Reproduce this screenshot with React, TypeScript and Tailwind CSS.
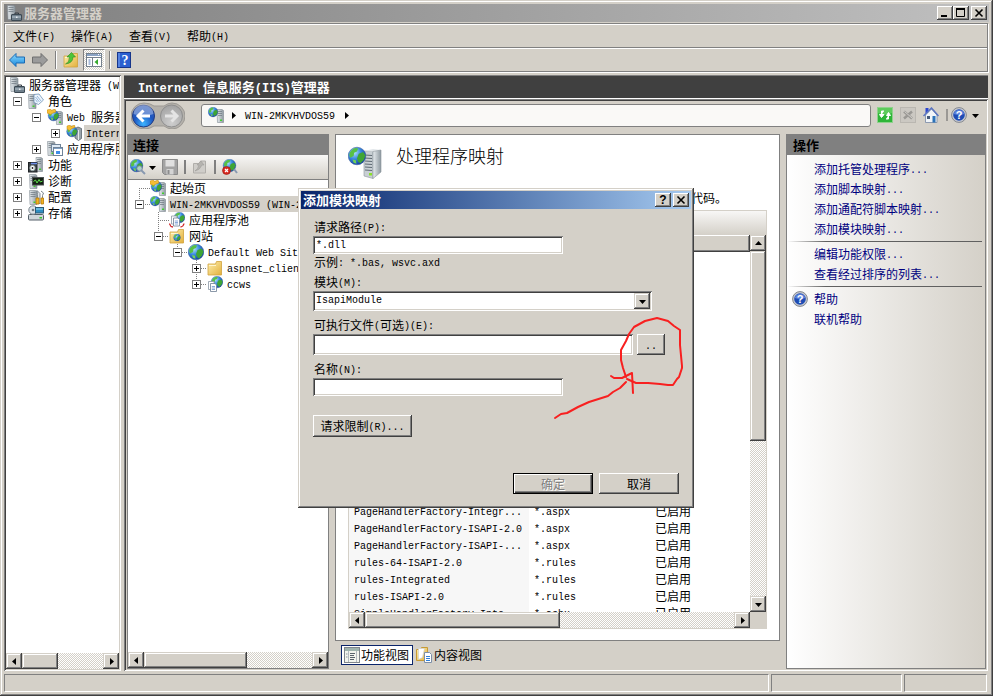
import type { ReactNode } from "react";
import clsx from "clsx";

const RAISED = "bg-[#d4d0c8] shadow-[inset_-1px_-1px_#404040,inset_1px_1px_#fff,inset_-2px_-2px_#808080]";
const RAISED_SOFT = "bg-[#d4d0c8] shadow-[inset_-1px_-1px_#404040,inset_1px_1px_#d4d0c8,inset_-2px_-2px_#808080,inset_2px_2px_#fff]";
const SUNKEN = "shadow-[inset_1px_1px_#808080,inset_-1px_-1px_#fff,inset_2px_2px_#404040,inset_-2px_-2px_#d4d0c8]";
const TRACK = "bg-[repeating-conic-gradient(#fff_0_25%,#d4d0c8_0_50%)] bg-[length:2px_2px]";
const MONO = "font-['Liberation_Mono','Noto_Sans_CJK_SC',monospace]";

// Latin runs are set in a half-width face beside the full-width CJK glyphs
function Txt({ children, bold }: { children: string; bold?: boolean }) {
  return (
    <>
      {children.split(/([\x20-\x7e]+)/).filter(Boolean).map((part, i) =>
        /^[\x20-\x7e]/.test(part) ? (
          <span key={i} className={clsx(MONO, "leading-none whitespace-pre", bold ? "text-[12px]" : "align-[1px] text-[10px]")}>{part}</span>
        ) : (
          <span key={i}>{part}</span>
        ),
      )}
    </>
  );
}

/* ---------- icons ---------- */

function Defs() {
  return (
    <svg className="absolute size-0" aria-hidden="true">
      <defs>
        <radialGradient id="globe" cx="0.35" cy="0.3" r="0.8">
          <stop offset="0" stopColor="#b5e4ff" />
          <stop offset="0.45" stopColor="#3b8be0" />
          <stop offset="1" stopColor="#0b2f94" />
        </radialGradient>
        <linearGradient id="metal" x1="0" x2="1" y1="0" y2="0">
          <stop offset="0" stopColor="#e8edf0" />
          <stop offset="1" stopColor="#8d989f" />
        </linearGradient>
        <linearGradient id="folder" x1="0" x2="1" y1="0" y2="1">
          <stop offset="0" stopColor="#fff0b0" />
          <stop offset="1" stopColor="#e2b03c" />
        </linearGradient>
        <radialGradient id="blueBall" cx="0.5" cy="0.85" r="0.9">
          <stop offset="0" stopColor="#3cb4ff" />
          <stop offset="0.5" stopColor="#1c55c0" />
          <stop offset="1" stopColor="#3c62b8" />
        </radialGradient>
        <radialGradient id="grayBall" cx="0.5" cy="0.8" r="0.9">
          <stop offset="0" stopColor="#cfcfcf" />
          <stop offset="1" stopColor="#9c9c9c" />
        </radialGradient>
        <linearGradient id="blueArrow" x1="0" x2="0" y1="0" y2="1">
          <stop offset="0" stopColor="#8fdcff" />
          <stop offset="1" stopColor="#1787dc" />
        </linearGradient>
      </defs>
    </svg>
  );
}

function Ico({ size = 16, children }: { size?: number; children: ReactNode }) {
  return (
    <svg width={size} height={size} viewBox="0 0 16 16" className="shrink-0" aria-hidden="true">{children}</svg>
  );
}

function Globe({ x, y, s }: { x: number; y: number; s: number }) {
  return (
    <g transform={`translate(${x} ${y}) scale(${s / 16})`}>
      <circle cx="8" cy="8" r="7.8" fill="url(#globe)" stroke="#3a5f9c" strokeWidth="0.5" />
      <path d="M3 3Q6 0 9 1.4L8 4 5.5 5 5 8 2 9.500Q0 6 3 3z" fill="#58c046" />
      <path d="M9.500 6l4-1.500 2 3-1.500 4-3 3-2-1.500-1-3z" fill="#3fa535" />
      <path d="M4 11l3 .8.5 3L5 14z" fill="#6fd05a" />
    </g>
  );
}

function Tower({ x, y, w = 7, h = 13 }: { x: number; y: number; w?: number; h?: number }) {
  return (
    <g transform={`translate(${x} ${y})`}>
      <path d={`M.5 .5h${w - 2}l1.500 1v${h - 1}h-${w - 1}z`} fill="url(#metal)" stroke="#7f8a92" strokeWidth="0.6" />
      <path d={`M1.500 2.500h${w - 3}M1.500 4.500h${w - 3}M1.500 6.500h${w - 3}`} stroke="#6b767e" strokeWidth="0.7" />
      <rect x={w - 3.5} y={h - 2.5} width="2" height="1.500" fill="#3fd02c" />
    </g>
  );
}

function FolderShape() {
  return (
    <>
      <path d="M1 4h7.500l1-2.500h5v13.500H1z" fill="url(#folder)" stroke="#d0a23c" strokeWidth="0.8" />
      <path d="M2 5.500h7" stroke="#fff6cf" />
    </>
  );
}

function Docs({ x, y }: { x: number; y: number }) {
  return (
    <g transform={`translate(${x} ${y})`}>
      <path d="M.5 .5h5.500v8H.5z" fill="#fff" stroke="#8a97a5" strokeWidth="0.8" />
      <path d="M2.500 2.500H7l1.500 1.500v6.500h-6z" fill="#fff" stroke="#6d7d92" strokeWidth="0.8" />
      <path d="M3.800 5.500h3.200M3.800 7h3.200M3.800 8.500h3.200" stroke="#6c93cf" strokeWidth="0.8" />
    </g>
  );
}

const ServerManagerIcon = () => (
  <Ico>
    <Tower x={1} y={0} w={8} h={14} />
    <path d="M9 9.500v-1.500h3.500v1.500" fill="none" stroke="#333b42" />
    <rect x="5.500" y="9.500" width="10" height="6" rx="0.500" fill="#70808c" stroke="#3d4a54" />
    <path d="M6 12h9" stroke="#b8c6d0" />
    <rect x="10" y="11.500" width="1.500" height="1.500" fill="#e8eef2" />
  </Ico>
);
const RolesIcon = () => (
  <Ico>
    <Tower x={0} y={1} w={8} h={14} />
    <path d="M6 1.500l5-.5 4.500 6-5 4.500-4.500-2z" fill="#eef5fc" stroke="#6f93b8" strokeWidth="0.8" />
    <path d="M7.500 4l4 5M9 3l4 5M7.500 6.500l2 2.800" stroke="#7fa8d4" strokeWidth="0.8" />
  </Ico>
);
const WebServerIcon = () => (
  <Ico>
    <Tower x={8.5} y={2} w={7} h={13} />
    <Globe x={1} y={1} s={11} />
    <path d="M0 1l3.500-1 1 1.500L8 0l1 3-3 1-2.500 1.500L0 4z" fill="#f5bd35" stroke="#c68a12" strokeWidth="0.500" />
  </Ico>
);
const SiteServerIcon = () => (
  <Ico>
    <Tower x={8.5} y={2} w={7} h={13} />
    <Globe x={0} y={0} s={10} />
  </Ico>
);
const IisIcon = () => (
  <Ico>
    <path d="M9 3.500l3-1.500 3.500 1.500v10l-3 2L9 13z" fill="#9aa4ab" stroke="#58636b" strokeWidth="0.8" />
    <path d="M12.500 5v10" stroke="#e4e9ec" />
    <Globe x={0.5} y={1} s={11} />
    <path d="M1 1l3-1 1 1.500L8.500 0l.5 2.500-3 1-2.500 2L1 4z" fill="#f5bd35" stroke="#c68a12" strokeWidth="0.500" />
  </Ico>
);
const AppServerIcon = () => (
  <Ico>
    <Tower x={0} y={0} w={8} h={14} />
    <rect x="4.500" y="3.500" width="9" height="7" fill="#dfeaf5" stroke="#6f8398" />
    <rect x="6.500" y="6.500" width="9" height="8" fill="#fff" stroke="#6f8398" />
    <path d="M7 7.500h8" stroke="#7fa0c4" />
    <rect x="9" y="10" width="4" height="3" fill="#3f8de8" />
  </Ico>
);
const FeaturesIcon = () => (
  <Ico>
    <Tower x={7.5} y={0} w={7} h={14} />
    <rect x="0.500" y="5.500" width="8.500" height="9.500" fill="#3f4448" stroke="#1f2326" />
    <path d="M3 6.500h6" stroke="#6c8fe8" strokeWidth="1.500" />
    <circle cx="4.500" cy="11" r="2.600" fill="#fff" stroke="#9aa" />
    <circle cx="4.500" cy="11" r="0.900" fill="#222" />
  </Ico>
);
const DiagnosticsIcon = () => (
  <Ico>
    <Tower x={1} y={1} w={8} h={14} />
    <rect x="4.500" y="4.500" width="11" height="7.500" fill="#152015" stroke="#4a4f52" />
    <path d="M5.500 8.500l2-1.500 1.500 3 2-3.500 1.500 2.500 2-1" fill="none" stroke="#5fe04c" />
  </Ico>
);
const ConfigIcon = () => (
  <Ico>
    <Tower x={1} y={1} w={8} h={14} />
    <path d="M9 1.500l3 3v10h-2.500v-9z" fill="#dfe4e8" stroke="#6c757c" strokeWidth="0.8" />
    <path d="M13 2l2.500 2-1 2.500v4" fill="none" stroke="#7b848b" />
    <path d="M8 9h3v6H8zM13 9h2.500v6H13z" fill="#f4b320" stroke="#b57a08" strokeWidth="0.8" />
  </Ico>
);
const StorageIcon = () => (
  <Ico>
    <rect x="0.500" y="9.500" width="15" height="5.500" rx="1" fill="#cfd6db" stroke="#56616a" />
    <rect x="11.500" y="12" width="2.500" height="1.500" fill="#35c42a" />
    <circle cx="5" cy="5" r="4.200" fill="#dbe2e8" stroke="#7d8890" />
    <circle cx="5" cy="5" r="1.300" fill="#6d7880" />
    <rect x="7.500" y="2.500" width="8" height="5.500" fill="#2e8fc4" stroke="#2c5874" />
    <path d="M8 4h7" stroke="#9fe0f4" />
  </Ico>
);
const AppPoolIcon = () => (
  <Ico>
    <Globe x={5} y={0} s={11} />
    <Docs x={2} y={3.5} />
    <path d="M.5 11.500q.5 3 3.500 3.500M15 11.500q-.5 3-3.500 3.500" fill="none" stroke="#d0262b" strokeWidth="1.300" />
  </Ico>
);
const SitesIcon = () => <Ico><FolderShape /><Globe x={4.500} y={6} s={7} /></Ico>;
const GlobeIcon = () => <Ico><Globe x={0} y={0} s={16} /></Ico>;
const FolderIcon = () => <Ico><FolderShape /></Ico>;
const AppIcon = () => <Ico><Globe x={4} y={0} s={12} /><Docs x={1} y={5} /></Ico>;

const ArrowIcon = ({ off }: { off?: boolean }) => (
  <Ico>
    <path
      d={off ? "M15.500 8L9 1.500V5H.5v6H9v3.500z" : "M.5 8L7 1.500V5h8.500v6H7v3.500z"}
      fill={off ? "#9b9b9b" : "url(#blueArrow)"}
      stroke={off ? "#6e6e6e" : "#1a6ab4"}
      strokeLinejoin="round"
    />
  </Ico>
);
const FolderUpIcon = () => (
  <Ico>
    <FolderShape />
    <path d="M2.500 12q4-1.500 4-7H4L8.500 .5 12.500 5h-2.500q0 6-7.500 7z" fill="#4cc43a" stroke="#2a8a1e" strokeWidth="0.6" />
  </Ico>
);
const PaneIcon = () => (
  <Ico>
    <rect x="0.500" y="1.500" width="15" height="13" fill="#fff" stroke="#74808c" />
    <path d="M1 3h14" stroke="#8aa3c4" strokeWidth="2" />
    <path d="M12 2.500h1M14 2.500h1" stroke="#fff" />
    <path d="M1 5.500h14M6.500 6v8" stroke="#74808c" />
    <path d="M2.500 8h2M2.500 10h2M2.500 12h2" stroke="#5379b5" />
    <path d="M12 7v6L8.500 10z" fill="#36a92c" />
  </Ico>
);
const HelpBookIcon = () => (
  <Ico>
    <rect x="1.500" y="0.500" width="13" height="15" fill="#2b5fd0" stroke="#17358a" />
    <path d="M3 1v14" stroke="#7fa6f2" />
    <text x="9" y="13" textAnchor="middle" fontSize="14" fontWeight="700" fontFamily="Liberation Serif, serif" fill="#fff">?</text>
  </Ico>
);
const HelpBall = () => (
  <Ico>
    <circle cx="8" cy="8" r="7.400" fill="#c9ccd2" stroke="#83878e" />
    <circle cx="8" cy="8" r="5.800" fill="#1f4cb4" />
    <path d="M2.800 7a5.300 5 0 0110.400 0q-5 2-10.400 0z" fill="#5a82dc" />
    <text x="8" y="12" textAnchor="middle" fontSize="11" fontWeight="700" fontFamily="Liberation Sans, sans-serif" fill="#fff">?</text>
  </Ico>
);
const ConnectIcon = () => (
  <Ico>
    <Globe x={0} y={0} s={13} />
    <circle cx="9.500" cy="9.500" r="2.800" fill="#dceafa" fillOpacity="0.7" stroke="#6d7d94" />
    <path d="M11.500 11.500l3.500 3.500" stroke="#8899b0" strokeWidth="2" />
  </Ico>
);
const DisconnectIcon = () => (
  <Ico>
    <Globe x={1} y={0} s={13} />
    <path d="M12 10l3 4" stroke="#8899b0" strokeWidth="2" />
    <circle cx="4.500" cy="11.500" r="4" fill="#d82a20" stroke="#96150e" strokeWidth="0.6" />
    <path d="M3 10l3 3M6 10l-3 3" stroke="#fff" strokeWidth="1.200" />
  </Ico>
);
const SaveIcon = () => (
  <Ico>
    <path d="M.5 .5h15v15h-13l-2-2z" fill="#a3a3a3" stroke="#8a8a8a" />
    <rect x="3.500" y="1" width="9" height="6.500" fill="#e0e0e0" />
    <rect x="4.500" y="10" width="7" height="5.500" fill="#d4d4d4" />
    <rect x="5.500" y="11" width="2" height="4" fill="#8c8c8c" />
  </Ico>
);
const UpOffIcon = () => (
  <Ico>
    <path d="M1.500 4.500h6l1-2.500h5v12h-12z" fill="#cfcdc9" stroke="#b0aeaa" />
    <path d="M3 12q3-2 4-6H5l4-4 3 4h-2q-2 5-7 6z" fill="#b5b3af" stroke="#a09e9a" strokeWidth="0.6" />
  </Ico>
);
const RefreshIcon = () => (
  <Ico>
    <rect x="0.500" y="0.500" width="15" height="15" fill="#2eb538" stroke="#8fd28c" />
    <path d="M1 1h14v5q-7 3-14 0z" fill="#7ddb74" fillOpacity="0.6" />
    <path d="M7 4H4.500v4M2.500 7.500l2 3 2.500-3zM9 12h2.500V8M9.500 8.500l2-3 2 3z" fill="#fff" stroke="#fff" />
  </Ico>
);
const StopIcon = () => (
  <Ico>
    <rect x="0.500" y="0.500" width="15" height="15" fill="#cbc8c2" stroke="#bab7b1" />
    <path d="M4 4.500l8 7M12 4.500l-8 7" stroke="#9a9894" strokeWidth="2.500" />
    <path d="M4.500 4.500l7.500 6.500" stroke="#dedcd8" strokeWidth="0.8" />
  </Ico>
);
const HomeIcon = () => (
  <Ico>
    <path d="M2.500 1h3v5h-3z" fill="#2c46d0" />
    <path d="M2.500 8L8.500 2l5.500 6v7.500H2.500z" fill="#f0f4f8" stroke="#7788a4" strokeWidth="0.8" />
    <path d="M.5 9l8-8 7 8" fill="none" stroke="#5a74c0" strokeWidth="1.500" />
    <rect x="4" y="9" width="3" height="3" fill="#465a78" />
    <rect x="9.500" y="9" width="3" height="6.500" fill="#2c73b8" />
  </Ico>
);
const FeatureViewIcon = () => (
  <Ico>
    <rect x="0.500" y="0.500" width="15" height="15" fill="#f2f4ee" stroke="#80868c" />
    <path d="M1 2.500h14" stroke="#9fb4ae" strokeWidth="3" />
    <path d="M4.500 4v11M12.500 4v11" stroke="#b4bac0" />
    <path d="M6 6.500h5M6 8.500h4M6 10.500h5M6 12.500h4" stroke="#59636c" />
    <path d="M2 7h1.500M2 10h1.500" stroke="#8a949c" />
  </Ico>
);
const ContentViewIcon = () => (
  <Ico>
    <path d="M.5 2.500h4l1-2h6v13h-11z" fill="url(#folder)" stroke="#c79a35" />
    <path d="M2.500 1.500h6l-2 9-4 2z" fill="#fff" stroke="#c8ccd0" strokeWidth="0.6" />
    <path d="M8.500 5.500h5l2 2v8h-7z" fill="#fff" stroke="#7d8fa8" />
    <path d="M10 9.500h4M10 11.500h4M10 13.500h4" stroke="#2f7fd8" />
  </Ico>
);
const HandlerMappingIcon = () => (
  <svg width="34" height="34" viewBox="0 0 34 34" className="shrink-0" aria-hidden="true">
    <path d="M16 5l9 .5v27L16 30z" fill="#c9d0d4" stroke="#8b959c" strokeWidth="0.6" />
    <path d="M16 5l9 .5 8-1.500-8-1z" fill="#e2e7ea" />
    <path d="M25 5.500l8-1.500v22l-8 6.500z" fill="url(#metal)" stroke="#8b959c" strokeWidth="0.6" />
    <path d="M17 9l7 .5M17 12l7 .5M17 15l7 .5M17 18l7 .5M17 21l7 .5M17 24l7 .5" stroke="#5f6b74" />
    <rect x="21" y="27" width="3" height="2.500" fill="#8be02a" />
    <Globe x={0} y={1} s={18} />
  </svg>
);

function Tri({ dir }: { dir: "up" | "down" | "left" | "right" }) {
  const d = { up: "M0 5L3.500 1 7 5z", down: "M0 2h7L3.500 6z", left: "M5 0v7L1 3.500z", right: "M2 0v7l4-3.500z" }[dir];
  return <svg width="7" height="7" viewBox="0 0 7 7" className="shrink-0" aria-hidden="true"><path d={d} fill="#000" /></svg>;
}

/* ---------- classic controls ---------- */

function ScrollButton({ dir }: { dir: "up" | "down" | "left" | "right" }) {
  return (
    <button aria-label={`scroll ${dir}`} className={clsx("flex size-4 shrink-0 items-center justify-center", RAISED_SOFT)}>
      <Tri dir={dir} />
    </button>
  );
}

function HScroll({ thumb }: { thumb: string }) {
  return (
    <div className={clsx("flex h-4 min-w-0 flex-1", TRACK)}>
      <ScrollButton dir="left" />
      <div className={clsx(RAISED_SOFT, thumb)} />
      <div className="flex-1" />
      <ScrollButton dir="right" />
    </div>
  );
}

function CaptionButton({ label, children }: { label: string; children: ReactNode }) {
  return (
    <button aria-label={label} className={clsx("flex h-[14px] w-4 items-center justify-center", RAISED)}>
      <svg width="12" height="10" viewBox="0 0 12 10" stroke="#000" fill="none" aria-hidden="true">{children}</svg>
    </button>
  );
}

function Expander({ open }: { open?: boolean }) {
  return (
    <svg width="9" height="9" viewBox="0 0 9 9" className="mr-[6px] shrink-0" aria-hidden="true">
      <rect x="0.500" y="0.500" width="8" height="8" fill="#fff" stroke="#808080" />
      <path d={open ? "M2 4.500h5" : "M2 4.500h5M4.500 2v5"} stroke="#000" />
    </svg>
  );
}

interface Node {
  label: string;
  icon: () => ReactNode;
  pad: string;
  expand?: "open" | "closed";
  selected?: boolean;
}

function TreeRow({ node }: { node: Node }) {
  const Icon = node.icon;
  return (
    <li className={clsx("flex h-4 items-center whitespace-nowrap", node.pad)}>
      {node.expand && <Expander open={node.expand === "open"} />}
      <Icon />
      <span className={clsx("ml-[2px] h-4 px-[2px] leading-4", node.selected && "bg-[#d4d0c8]")}><Txt>{node.label}</Txt></span>
    </li>
  );
}

const managerTree: Node[] = [
  { label: "服务器管理器 (W", icon: ServerManagerIcon, pad: "pl-[3px]" },
  { label: "角色", icon: RolesIcon, pad: "pl-[7px]", expand: "open" },
  { label: "Web 服务器", icon: WebServerIcon, pad: "pl-[26px]", expand: "open" },
  { label: "Internet", icon: IisIcon, pad: "pl-[45px]", expand: "closed", selected: true },
  { label: "应用程序服", icon: AppServerIcon, pad: "pl-[26px]", expand: "closed" },
  { label: "功能", icon: FeaturesIcon, pad: "pl-[7px]", expand: "closed" },
  { label: "诊断", icon: DiagnosticsIcon, pad: "pl-[7px]", expand: "closed" },
  { label: "配置", icon: ConfigIcon, pad: "pl-[7px]", expand: "closed" },
  { label: "存储", icon: StorageIcon, pad: "pl-[7px]", expand: "closed" },
];

const connectionTree: Node[] = [
  { label: "起始页", icon: WebServerIcon, pad: "pl-[22px]" },
  { label: "WIN-2MKVHVDOS59 (WIN-2", icon: SiteServerIcon, pad: "pl-[7px]", expand: "open", selected: true },
  { label: "应用程序池", icon: AppPoolIcon, pad: "pl-[41px]" },
  { label: "网站", icon: SitesIcon, pad: "pl-[26px]", expand: "open" },
  { label: "Default Web Site", icon: GlobeIcon, pad: "pl-[45px]", expand: "open" },
  { label: "aspnet_client", icon: FolderIcon, pad: "pl-[64px]", expand: "closed" },
  { label: "ccws", icon: AppIcon, pad: "pl-[64px]", expand: "closed" },
];

const handlers = [
  ["PageHandlerFactory-Integr...", "*.aspx"],
  ["PageHandlerFactory-ISAPI-2.0", "*.aspx"],
  ["PageHandlerFactory-ISAPI-...", "*.aspx"],
  ["rules-64-ISAPI-2.0", "*.rules"],
  ["rules-Integrated", "*.rules"],
  ["rules-ISAPI-2.0", "*.rules"],
  ["SimpleHandlerFactory-Inte...", "*.ashx"],
];

/* ---------- panels ---------- */

function Separator() {
  return <div className="h-[18px] w-[2px] border-r border-white bg-[#808080]" />;
}

function ManagerTree() {
  return (
    <nav className={clsx("flex w-[117px] shrink-0 flex-col bg-white p-[2px]", SUNKEN)}>
      <ul className="min-h-0 flex-1 overflow-hidden">
        {managerTree.map((n) => <TreeRow key={n.label} node={n} />)}
      </ul>
      <div className="flex"><HScroll thumb="w-9" /></div>
    </nav>
  );
}

function NavBar() {
  return (
    <div className="flex h-[33px] shrink-0 items-center pr-[7px] pb-[5px] pl-[5px]">
      <svg width="54" height="28" viewBox="0 -1 54 28" className="shrink-0" aria-hidden="true">
        <path d="M13 1q6 0 10 3h10q4-3 8-3a13 13 0 010 26q-4 0-8-3H23q-4 3-10 3a13 13 0 010-26z" fill="#b4b1ab" stroke="#9d9a95" />
        <circle cx="12.500" cy="14" r="11" fill="url(#blueBall)" stroke="#203a80" />
        <path d="M2.500 12a10 10 0 0120 0q-10 4-20 0z" fill="#fff" fillOpacity="0.35" />
        <path d="M19 14H8M12.500 8.500L7 14l5.500 5.500" fill="none" stroke="#fff" strokeWidth="3" />
        <circle cx="40.500" cy="14" r="11" fill="url(#grayBall)" stroke="#8e8e8e" />
        <path d="M34 14h11M40.500 8.500L46 14l-5.500 5.500" fill="none" stroke="#e4e4e4" strokeWidth="3" />
      </svg>
      <div className="ml-4 flex h-[23px] flex-1 items-center rounded-[3px] border border-[#808080] bg-[#faf9f7] pl-[6px]">
        <SiteServerIcon />
        <span className="ml-[6px]"><Tri dir="right" /></span>
        <span className="mx-2"><Txt>WIN-2MKVHVDOS59</Txt></span>
        <Tri dir="right" />
      </div>
      <div className="ml-[6px] flex items-center gap-[7px]">
        <button aria-label="刷新"><RefreshIcon /></button>
        <button aria-label="停止"><StopIcon /></button>
        <button aria-label="主页"><HomeIcon /></button>
        <div className="h-3 w-[2px] bg-[#9a9894]" />
      </div>
      <button aria-label="帮助" className="ml-[3px] flex items-center gap-[5px]"><HelpBall /><Tri dir="down" /></button>
    </div>
  );
}

function Connections() {
  return (
    <section className="flex w-[202px] shrink-0 flex-col border border-t-0 border-[#808080] bg-white">
      <h2 className="h-[21px] bg-[#808080] pl-[5px] text-[13px] leading-[22px] font-bold">连接</h2>
      <div className="flex h-[25px] items-center border-b border-[#808080] bg-linear-to-b from-[#f8f7f6] to-[#d4d0c8] pl-[2px]">
        <button aria-label="连接" className="flex items-center gap-[3px]"><ConnectIcon /><Tri dir="down" /></button>
        <span className="ml-[6px]"><SaveIcon /></span>
        <div className="mx-[6px] h-[14px] w-[2px] bg-[#808080]" />
        <UpOffIcon />
        <div className="mx-[6px] h-[14px] w-[2px] bg-[#808080]" />
        <DisconnectIcon />
      </div>
      <div className="relative min-h-0 flex-1 overflow-hidden">
        <svg width="100" height="112" className="absolute top-0 left-0" fill="none" stroke="#808080" strokeDasharray="1 1" aria-hidden="true">
          <path d="M11.500 8v12M11 8.500h11M17 24.500h5M30.500 32v22M30 40.500h11M35 56.500h6M49.500 64v6M54 72.500h6M68.500 80v22M73 88.500h6M73 104.500h6" />
        </svg>
        <ul className="relative">
          {connectionTree.map((n) => <TreeRow key={n.label} node={n} />)}
        </ul>
      </div>
      <div className="flex"><HScroll thumb="w-[103px]" /></div>
    </section>
  );
}

function HandlerList() {
  return (
    <div className="mx-3 mt-1 mb-[11px] flex min-h-0 flex-1 flex-col border border-[#d4d0c8]">
      <div className="h-6 shrink-0 bg-linear-to-b from-[#f8f7f6] to-[#d4d0c8]" />
      <div className="flex min-h-0 flex-1">
        <div className="flex min-w-0 flex-1 flex-col overflow-hidden">
          <div className={clsx("h-[17px] shrink-0", RAISED)} />
          <div className="min-h-0 flex-1 overflow-hidden pt-[250px]">
            <table className="w-full table-fixed text-left">
              <colgroup><col className="w-[180px]" /><col className="w-[120px]" /><col /></colgroup>
              <tbody>
                {handlers.map(([name, path]) => (
                  <tr key={name} className="h-[17px] leading-[17px] whitespace-nowrap">
                    <td className="bg-[#f7f7f7] p-0 pl-[5px]"><Txt>{name}</Txt></td>
                    <td className="p-0 pl-[5px]"><Txt>{path}</Txt></td>
                    <td className="p-0 pl-[6px]">已启用</td>
                  </tr>
                ))}
              </tbody>
            </table>
          </div>
        </div>
        <div className={clsx("flex w-4 shrink-0 flex-col", TRACK)}>
          <ScrollButton dir="up" />
          <div className={clsx("h-[190px]", RAISED_SOFT)} />
          <div className="flex-1" />
          <ScrollButton dir="down" />
        </div>
      </div>
      <div className="flex bg-[#d4d0c8] pr-4"><HScroll thumb="w-[195px]" /></div>
    </div>
  );
}

function Actions() {
  const item = "block h-5 pl-[27px] text-left leading-5";
  const rule = "my-[2px] mr-[3px] h-px bg-linear-to-r from-transparent via-[#606060] via-20% to-[#606060]";
  return (
    <section className="flex w-[200px] shrink-0 flex-col border border-t-0 border-[#808080] bg-linear-to-r from-white to-[#d4d0c8]">
      <h2 className="h-[21px] bg-[#808080] pl-[6px] text-[13px] leading-[22px] font-bold">操作</h2>
      <div className="pt-1 text-[#000080]">
        {["添加托管处理程序...", "添加脚本映射...", "添加通配符脚本映射...", "添加模块映射..."].map((t) => (
          <a key={t} href="#" className={item}><Txt>{t}</Txt></a>
        ))}
        <div className={rule} />
        {["编辑功能权限...", "查看经过排序的列表..."].map((t) => (
          <a key={t} href="#" className={item}><Txt>{t}</Txt></a>
        ))}
        <div className={rule} />
        <a href="#" className="flex h-5 items-center gap-[6px] pl-[5px]"><HelpBall />帮助</a>
        <a href="#" className={item}>联机帮助</a>
      </div>
    </section>
  );
}

function AddModuleDialog() {
  const field = clsx("block bg-white px-[3px] text-[10px] outline-none", MONO, SUNKEN);
  const label = "block h-[17px] pl-px leading-[15px]";
  return (
    <div
      role="dialog"
      aria-label="添加模块映射"
      className="absolute top-[188px] left-[298px] h-[320px] w-[396px] bg-[#d4d0c8] p-[3px] shadow-[inset_-1px_-1px_#404040,inset_1px_1px_#d4d0c8,inset_-2px_-2px_#808080,inset_2px_2px_#fff]"
    >
      <div className="flex h-[18px] items-center bg-linear-to-r from-[#0a246a] to-[#a6caf0] pr-[2px] pl-[2px]">
        <span className="flex-1 text-[13px] leading-[18px] font-bold text-white">添加模块映射</span>
        <div className="flex gap-[2px]">
          <button aria-label="帮助" className={clsx("flex h-[14px] w-4 items-center justify-center font-['Liberation_Sans',sans-serif] text-[12px] leading-[14px] font-bold", RAISED)}>?</button>
          <CaptionButton label="关闭"><path d="M2.500 1.500l7 7M9.500 1.500l-7 7" strokeWidth="1.600" /></CaptionButton>
        </div>
      </div>
      <form className="px-3 pt-[10px]" onSubmit={(e) => e.preventDefault()}>
        <label htmlFor="path" className={label}><Txt>请求路径(P):</Txt></label>
        <input id="path" defaultValue="*.dll" className={clsx(field, "h-[18px] w-[250px]")} />
        <p className={clsx(label, "mb-[3px]")}><Txt>示例: *.bas, wsvc.axd</Txt></p>
        <label htmlFor="module" className={label}><Txt>模块(M):</Txt></label>
        <div className="relative mb-[6px] w-[339px]">
          <select id="module" className={clsx(field, "h-5 w-full appearance-none")}>
            <option>IsapiModule</option>
          </select>
          <span className={clsx("pointer-events-none absolute top-[2px] right-[2px] flex size-4 items-center justify-center", RAISED_SOFT)}><Tri dir="down" /></span>
        </div>
        <label htmlFor="exe" className={label}><Txt>可执行文件(可选)(E):</Txt></label>
        <div className="mb-[6px] flex gap-1">
          <input id="exe" className={clsx(field, "h-[21px] w-[320px]")} />
          <button type="button" className={clsx("h-[21px] w-7", RAISED)}><Txt>..</Txt></button>
        </div>
        <label htmlFor="name" className={label}><Txt>名称(N):</Txt></label>
        <input id="name" className={clsx(field, "h-[18px] w-[250px]")} />
        <button type="button" className={clsx("mt-[19px] block h-[22px] w-[99px]", RAISED)}><Txt>请求限制(R)...</Txt></button>
        <div className="mt-9 flex justify-end gap-[6px]">
          <button disabled className="h-[21px] w-20 border border-black bg-[#d4d0c8] text-[#808080] shadow-[inset_1px_1px_#fff,inset_-1px_-1px_#404040,inset_-2px_-2px_#808080] [text-shadow:1px_1px_#fff]">确定</button>
          <button type="button" className={clsx("h-[21px] w-20", RAISED)}>取消</button>
        </div>
      </form>
      <svg width="396" height="320" className="pointer-events-none absolute top-0 left-0" fill="none" stroke="#f82020" strokeWidth="2" strokeLinecap="round" strokeLinejoin="round" aria-hidden="true">
        <path d="M328 189l-3-9-2-8v-10l5-9 3-7 5-7 11-6 12-3 11 3 6 5 6 4v15l2 21v2l-3 9-2 2-4 6h-5l-8-1-12-1h-12l-9-4" />
        <path d="M257 230l6-4 6-1 11-6 11-5 19-6 5-4 7-4 6-6" />
        <path d="M313 188l3 2h8l10-5 1 20" />
      </svg>
    </div>
  );
}

export default function App() {
  return (
    <div className="relative flex h-screen min-h-[600px] w-full flex-col overflow-hidden bg-[#d4d0c8] p-1 font-['Noto_Sans_CJK_SC',sans-serif] text-[12px] leading-4 text-black shadow-[inset_-1px_-1px_#404040,inset_1px_1px_#d4d0c8,inset_-2px_-2px_#808080,inset_2px_2px_#fff]">
      <Defs />
      <header className="flex h-[18px] shrink-0 items-center bg-linear-to-r from-[#808080] to-[#c0c0c0] pr-[2px] pl-[2px]">
        <ServerManagerIcon />
        <h1 className="ml-[2px] flex-1 text-[13px] leading-[18px] font-bold text-[#d4d0c8]">服务器管理器</h1>
        <div className="flex">
          <CaptionButton label="最小化"><path d="M2 8h6" strokeWidth="2" /></CaptionButton>
          <CaptionButton label="最大化"><path d="M1.500 1v7.500h8V1M1 1h9" strokeWidth="1" /><path d="M1 1h9" strokeWidth="2" /></CaptionButton>
          <span className="w-[2px]" />
          <CaptionButton label="关闭"><path d="M2.500 1.500l7 7M9.500 1.500l-7 7" strokeWidth="1.600" /></CaptionButton>
        </div>
      </header>

      <div className="mt-px mr-px shrink-0 border border-[#808080] shadow-[1px_1px_#fff]">
        <div className="flex h-6 items-center gap-4 border-b border-[#808080] pl-2 shadow-[inset_1px_1px_#fff]">
          {["文件(F)", "操作(A)", "查看(V)", "帮助(H)"].map((m) => <button key={m}><Txt>{m}</Txt></button>)}
        </div>
        <div className="flex h-[23px] items-center pl-1 shadow-[inset_1px_1px_#fff]">
          <button aria-label="后退"><ArrowIcon /></button>
          <button aria-label="前进" className="mr-[7px] ml-[7px]"><ArrowIcon off /></button>
          <Separator />
          <button aria-label="上一级" className="mr-1 ml-[6px]"><FolderUpIcon /></button>
          <button aria-label="显示/隐藏" className={clsx("flex h-[22px] w-[22px] items-center justify-center border border-t-[#808080] border-r-white border-b-white border-l-[#808080]", TRACK)}><PaneIcon /></button>
          <span className="mr-[5px] ml-1"><Separator /></span>
          <button aria-label="帮助"><HelpBookIcon /></button>
        </div>
      </div>

      <div className="mt-[3px] mr-px flex min-h-0 flex-1 gap-[3px]">
        <ManagerTree />
        <main className="flex min-w-0 flex-1 flex-col">
          <h2 className="h-6 shrink-0 border-t border-b border-t-[#808080] border-b-white bg-[#404040] pl-[14px] text-[13px] leading-[22px] font-bold text-white">
            <Txt bold>Internet 信息服务(IIS)管理器</Txt>
          </h2>
          <div className={clsx("flex min-h-0 flex-1 flex-col p-[2px]", SUNKEN)}>
            <NavBar />
            <div className="flex min-h-0 flex-1 gap-[6px] pl-px">
              <Connections />
              <div className="flex min-w-0 flex-1 flex-col">
                <section className="flex min-h-0 flex-1 flex-col border border-[#808080] bg-white">
                  <div className="flex h-[55px] shrink-0 gap-[14px] pt-[11px] pl-3">
                    <HandlerMappingIcon />
                    <h2 className="text-[18px] leading-[18px] font-light">处理程序映射</h2>
                  </div>
                  <p className="pr-[52px] text-right">代码。</p>
                  <HandlerList />
                </section>
                <div className="flex shrink-0 pt-1 pb-1 pl-[6px]">
                  <button className="flex h-5 items-center gap-px border border-[#0a246a] bg-white pr-[3px] pl-[2px]"><FeatureViewIcon />功能视图</button>
                  <button className="flex h-5 items-center gap-[2px] px-[3px]"><ContentViewIcon />内容视图</button>
                </div>
              </div>
              <Actions />
            </div>
          </div>
        </main>
      </div>

      <footer className="mt-[3px] mr-[2px] flex h-[18px] shrink-0 gap-[2px]">
        <div className="flex-1 border border-t-[#808080] border-r-white border-b-white border-l-[#808080]" />
        <div className="w-[131px] border border-t-[#808080] border-r-white border-b-white border-l-[#808080]" />
        <div className="w-[83px] border border-t-[#808080] border-r-white border-b-white border-l-[#808080]" />
      </footer>

      <AddModuleDialog />
    </div>
  );
}
